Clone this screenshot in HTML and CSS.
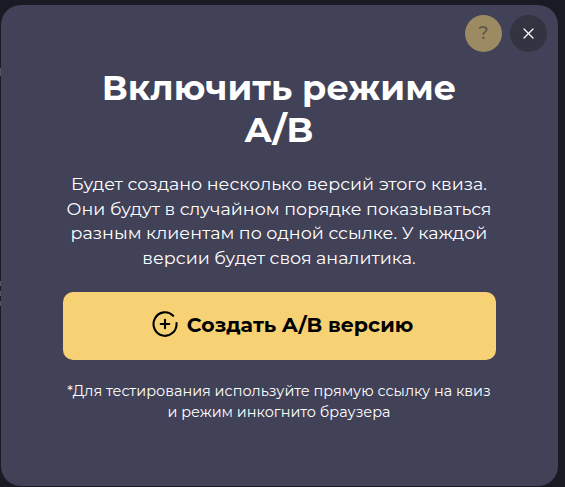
FILE: index.html
```html
<!DOCTYPE html>
<html lang="ru">
<head>
    <meta charset="UTF-8">
    <meta name="viewport" content="width=device-width, initial-scale=1.0">
    <title>Включить режим A/B</title>
    <link rel="stylesheet" href="styles.css">
</head>
<body>
    <div class="modal">
        <div class="modal-actions">
            <button class="round-button help" aria-label="Помощь">?</button>
            <button class="round-button close" aria-label="Закрыть">
                <svg width="11" height="11" viewBox="0 0 11 11" fill="none" stroke="currentColor" stroke-width="1.2" stroke-linecap="round">
                    <path d="M1 1l9 9M10 1l-9 9"/>
                </svg>
            </button>
        </div>

        <h1>Включить режиме<br>A/B</h1>

        <p class="description">
            Будет создано несколько версий этого квиза.<br>
            Они будут в случайном порядке показываться<br>
            разным клиентам по одной ссылке. У каждой<br>
            версии будет своя аналитика.
        </p>

        <button class="create-button">
            <svg width="26" height="28" viewBox="0 0 26 28" fill="none" stroke="currentColor" stroke-width="2.1" stroke-linecap="round">
                <path d="M21.2 4.7A11.5 11.8 0 1 0 24.5 12"/>
                <path d="M13 8.7v8.6M8.7 13h8.6"/>
            </svg>
            <span>Создать A/B версию</span>
        </button>

        <p class="note">
            *Для тестирования используйте прямую ссылку на квиз<br>
            и режим инкогнито браузера
        </p>
    </div>

    <!-- edge of the page behind the modal -->
    <div class="page-edge">
        <i class="mark"></i>
        <i class="dot"></i>
        <i class="dot"></i>
        <i class="dot"></i>
    </div>
</body>
</html>
```
FILE: styles.css
```css
* {
    box-sizing: border-box;
}
body {
    margin: 0;
    height: 487px;
    padding: 4.5px 7.5px 2px 0.5px;
    overflow: hidden;
    background-color: #191a23;
    font-family: Montserrat, Inter, sans-serif;
    color: #fff;
}
button {
    border: none;
    padding: 0;
    font-family: inherit;
    cursor: pointer;
}
.modal {
    height: 481px;
    padding: 10px 10px 0;
    border-radius: 20px;
    background-color: #414158;
    text-align: center;
}
.modal-actions {
    display: flex;
    justify-content: flex-end;
    gap: 8px;
    padding-right: 0.6px;
}
.round-button {
    display: flex;
    align-items: center;
    justify-content: center;
    width: 37px;
    height: 37px;
    border-radius: 50%;
}
.help {
    background-color: #9c8b62;
    color: #5d5547;
    font-size: 18px;
    font-weight: 500;
}
.close {
    background-color: #333441;
    color: #fff;
}
h1 {
    margin: 15px 0 0;
    font-size: 35px;
    line-height: 42px;
    font-weight: 700;
}
.description {
    margin: 21.5px 0 0;
    font-size: 17.5px;
    line-height: 24.5px;
}
.create-button {
    display: flex;
    align-items: center;
    justify-content: center;
    gap: 9px;
    width: 433px;
    height: 68px;
    margin: 21.5px auto 0;
    padding: 0 0 2px 7px;
    border-radius: 10px;
    background-color: #f6d274;
    color: #000;
    font-size: 20.5px;
    font-weight: 700;
}
.note {
    margin: 21px 0 0;
    font-size: 14.45px;
    line-height: 21px;
}
.page-edge {
    position: absolute;
    top: 68px;
    left: 0;
    width: 1px;
}
.page-edge i {
    display: block;
    background-color: #55545f;
}
.mark {
    height: 8px;
    margin-bottom: 205px;
}
.dot {
    height: 5px;
    margin-bottom: 5px;
}
```
